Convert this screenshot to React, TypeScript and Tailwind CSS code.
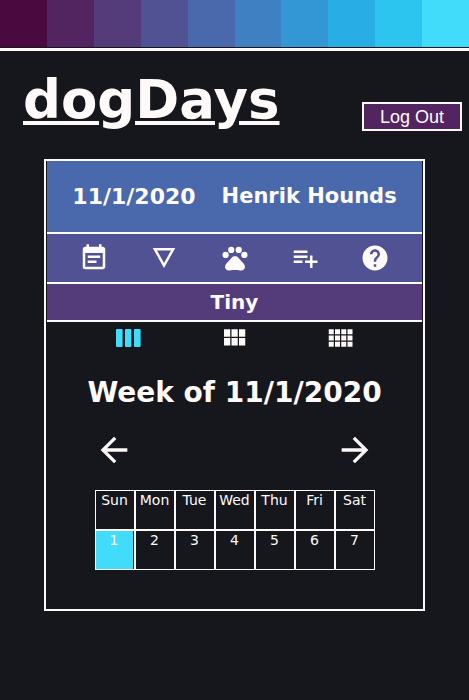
import type { ReactNode } from "react";
import {
  MdArrowBack,
  MdArrowForward,
  MdEventNote,
  MdHelp,
  MdPets,
  MdPlaylistAdd,
} from "react-icons/md";

const stripe = [
  "bg-[#4a0a40]",
  "bg-[#522561]",
  "bg-[#543c7a]",
  "bg-[#505294]",
  "bg-[#4969ac]",
  "bg-[#3f80c2]",
  "bg-[#3497d5]",
  "bg-[#28ade4]",
  "bg-[#2cc5f0]",
  "bg-[#40dcfa]",
];

const dayNames = ["Sun", "Mon", "Tue", "Wed", "Thu", "Fri", "Sat"];
const dates = [1, 2, 3, 4, 5, 6, 7];

function IconButton({ label, children }: { label: string; children: ReactNode }) {
  return (
    <button type="button" aria-label={label} className="block cursor-pointer">
      {children}
    </button>
  );
}

function Details() {
  return (
    <svg viewBox="0 0 24 24" className="size-[30px]" fill="currentColor">
      <path d="M3 4l9 16 9-16H3zm3.38 2h11.25L12 16 6.38 6z" />
    </svg>
  );
}

function WeekColumns() {
  return (
    <svg viewBox="0 0 30 30" className="size-[30px]" fill="currentColor">
      <rect x="3" y="6" width="6.6" height="18" rx="1" />
      <rect x="12" y="6" width="6.4" height="18" rx="1" />
      <rect x="21" y="6" width="6.6" height="18" rx="1" />
    </svg>
  );
}

function Modules() {
  return (
    <svg viewBox="0 0 24 24" className="size-[30px]" fill="currentColor">
      <path d="M4 11h5V5H4v6zm0 7h5v-6H4v6zm6 0h5v-6h-5v6zm6 0h5v-6h-5v6zm-6-7h5V5h-5v6zm6-6v6h5V5h-5z" />
    </svg>
  );
}

function Comfy() {
  return (
    <svg viewBox="0 0 24 24" className="size-[30px]" fill="currentColor">
      <path d="M3 9h4V5H3v4zm0 5h4v-4H3v4zm5 0h4v-4H8v4zm5 0h4v-4h-4v4zM8 9h4V5H8v4zm5-4v4h4V5h-4zm5 9h4v-4h-4v4zM3 19h4v-4H3v4zm5 0h4v-4H8v4zm5 0h4v-4h-4v4zm5 0h4v-4h-4v4zm0-14v4h4V5h-4z" />
    </svg>
  );
}

export default function App() {
  return (
    <div className="min-h-screen bg-[#16171c] font-['DejaVu_Sans',sans-serif] text-[#fffafa]">
      <div className="border-b-3 border-[#fffafa] pb-px">
        <div className="grid h-[47px] grid-cols-10">
          {stripe.map((color) => (
            <div key={color} className={color} />
          ))}
        </div>
      </div>

      <header className="flex items-end justify-between pt-[18px] pr-[7px] pl-[23px]">
        <h1 className="text-[53px] leading-[62px] font-bold">
          <a href="#home" className="underline decoration-4 underline-offset-[3px]">
            dogDays
          </a>
        </h1>
        <button
          type="button"
          className="h-[29px] w-[100px] cursor-pointer border-2 border-[#fffafa] bg-[#522561] font-['Liberation_Sans',Arial,sans-serif] text-lg leading-6"
        >
          Log Out
        </button>
      </header>

      <main className="mx-11 mt-7 border-2 border-[#fffafa] px-px pb-[39px]">
        <div className="flex h-[73px] items-center justify-center gap-[26px] border-b-2 border-[#fffafa] bg-[#4969ac] font-bold whitespace-nowrap">
          <h2 className="text-[22px]">11/1/2020</h2>
          <h2 className="text-[21px]">Henrik Hounds</h2>
        </div>

        <nav className="flex h-[50px] items-center justify-between border-b-2 border-[#fffafa] bg-[#505294] px-8">
          <IconButton label="Calendar">
            <MdEventNote className="size-[30px]" />
          </IconButton>
          <IconButton label="Details">
            <Details />
          </IconButton>
          <IconButton label="Dogs">
            <MdPets className="size-[30px]" />
          </IconButton>
          <IconButton label="Add">
            <MdPlaylistAdd className="size-[30px]" />
          </IconButton>
          <IconButton label="Help">
            <MdHelp className="size-[30px]" />
          </IconButton>
        </nav>

        <h3 className="h-[38px] border-b-2 border-[#fffafa] bg-[#543c7a] text-center text-[20px] leading-9 font-bold">
          Tiny
        </h3>

        <div className="flex justify-between pt-px pr-[67px] pl-[66px]">
          <span className="text-[#40dcfa]">
            <IconButton label="Week view">
              <WeekColumns />
            </IconButton>
          </span>
          <IconButton label="Two week view">
            <Modules />
          </IconButton>
          <IconButton label="Month view">
            <Comfy />
          </IconButton>
        </div>

        <h2 className="mt-5 text-center text-[28px] leading-10 font-bold whitespace-nowrap">
          Week of 11/1/2020
        </h2>

        <div className="mt-[17px] flex justify-between px-[47px]">
          <IconButton label="Previous week">
            <MdArrowBack className="size-10" />
          </IconButton>
          <IconButton label="Next week">
            <MdArrowForward className="size-10" />
          </IconButton>
        </div>

        <table className="mx-auto mt-5 w-[280px] table-fixed border-separate border-spacing-0 text-center text-sm leading-[18px]">
          <thead>
            <tr>
              {dayNames.map((day) => (
                <th key={day} className="h-10 border border-[#fffafa] p-0 align-top font-normal">
                  {day}
                </th>
              ))}
            </tr>
          </thead>
          <tbody>
            <tr>
              {dates.map((date) => (
                <td key={date} className="h-10 border border-[#fffafa] p-0 align-top">
                  <div className={date === 1 ? "mr-px h-[38px] bg-[#40dcfa]" : "h-[38px]"}>
                    {date}
                  </div>
                </td>
              ))}
            </tr>
          </tbody>
        </table>
      </main>
    </div>
  );
}
